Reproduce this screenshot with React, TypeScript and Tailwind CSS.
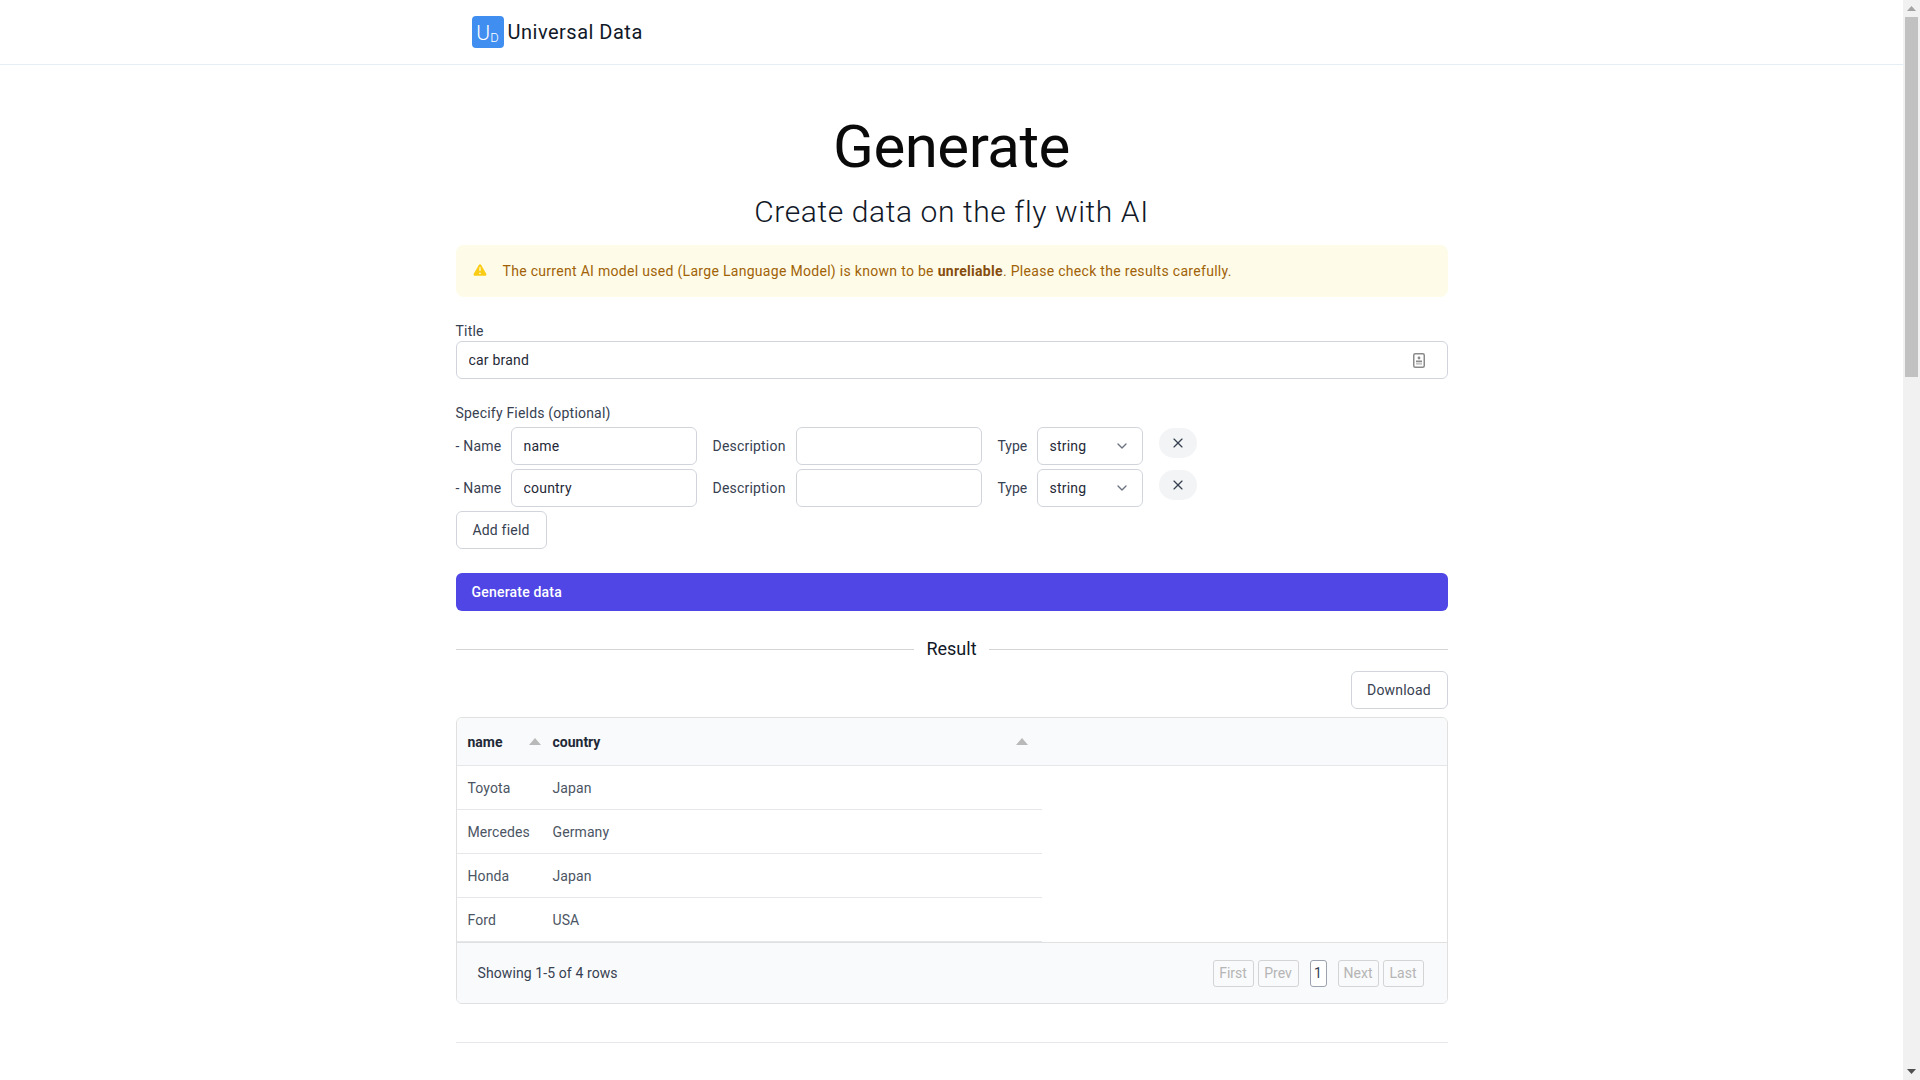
import React from "react";
import { X, ChevronDown } from "lucide-react";

const Caret = () => (
  <svg width="12" height="7" viewBox="0 0 12 7" className="shrink-0">
    <path d="M6 0 L12 7 L0 7 Z" fill="#b9b9b9" />
  </svg>
);

const inputCls =
  "h-[38px] rounded-md border border-[#d1d5db] bg-white px-3 text-sm text-[#1f2937] outline-none";

function FieldRow({ value }: { value: string }) {
  return (
    <div className="flex items-start">
      <span className="w-[55px] text-sm leading-[38px] text-[#374151] tracking-[0.2px]">- Name</span>
      <input readOnly defaultValue={value} className={`${inputCls} w-[186px] tracking-[0.2px]`} />
      <span className="ml-4 w-[83px] text-sm leading-[38px] text-[#374151] tracking-[0.2px]">Description</span>
      <input readOnly defaultValue="" className={`${inputCls} w-[186px]`} />
      <span className="ml-4 w-[39px] text-sm leading-[38px] text-[#374151]">Type</span>
      <div className={`${inputCls} w-[106px] flex items-center justify-between`}>
        <span className="tracking-[0.2px]">string</span>
        <ChevronDown size={16} strokeWidth={2} color="#6b7280" />
      </div>
      <button className="ml-4 mt-px flex h-[30px] w-[38px] items-center justify-center rounded-full bg-[#f3f4f6] text-[#374151]">
        <X size={16} strokeWidth={1.75} />
      </button>
    </div>
  );
}

function DataRow({ a, b }: { a: string; b: string }) {
  return (
    <div className="flex h-11 w-[585px] items-center border-b border-[#e5e7eb] text-sm text-[#4b5563]">
      <span className="w-[96px] pl-[11px] tracking-[0.1px]">{a}</span>
      <span className="tracking-[0.1px]">{b}</span>
    </div>
  );
}

function PageBtn({ children }: { children: React.ReactNode }) {
  return (
    <button className="flex h-[27px] w-[41px] items-center justify-center rounded-[3px] border border-[#d4d4d4] text-sm text-[#b5b5b5]">
      {children}
    </button>
  );
}

export default function App() {
  return (
    <div className="flex h-screen overflow-hidden bg-white font-['Roboto',sans-serif]">
      <main className="min-w-0 flex-1">
        <header className="h-[65px] border-b border-[#e5eef5]">
          <div className="mx-auto flex h-16 w-[1024px] items-center pl-[32px]">
            <div className="flex h-8 w-8 items-end justify-center rounded-[4px] bg-[#3f8ef0] pb-[4px] text-white">
              <span className="text-[21px] font-light leading-none">U</span>
              <span className="text-[13px] font-light leading-none">D</span>
            </div>
            <span className="ml-1 text-[20px] tracking-[0.5px] text-[#111827]">Universal Data</span>
          </div>
        </header>

        <div className="mx-auto w-[1024px] px-4">
          <h1 className="mt-[52px] text-center text-6xl font-normal text-[#0a0a0a] tracking-[-0.5px]">Generate</h1>
          <h2 className="mt-[17px] text-center text-3xl font-light text-[#111827] tracking-[0.6px]">
            Create data on the fly with AI
          </h2>

          <div className="mt-[15px] flex h-[52px] items-center rounded-lg bg-[#fefce8] pl-4 text-sm text-[#a16207]">
            <svg width="16" height="16" viewBox="0 0 20 20" fill="#facc15" className="shrink-0">
              <path
                fillRule="evenodd"
                clipRule="evenodd"
                d="M8.485 2.495c.673-1.167 2.357-1.167 3.03 0l6.28 10.875c.673 1.167-.17 2.625-1.516 2.625H3.72c-1.347 0-2.189-1.458-1.515-2.625L8.485 2.495zM10 5a.75.75 0 01.75.75v3.5a.75.75 0 01-1.5 0v-3.5A.75.75 0 0110 5zm0 9a1 1 0 100-2 1 1 0 000 2z"
              />
            </svg>
            <p className="ml-[15px] tracking-[0.3px]">
              The current AI model used (Large Language Model) is known to be{" "}
              <strong className="font-bold text-[#854d0e]">unreliable</strong>. Please check the results carefully.
            </p>
          </div>

          <label className="mt-6 block text-sm text-[#374151] tracking-[0.2px]">Title</label>
          <div className="relative">
            <input readOnly defaultValue="car brand" className={`${inputCls} w-full tracking-[0.2px]`} />
            <svg width="12" height="15" viewBox="0 0 12 15" className="absolute right-[23px] top-[12px]">
              <rect x="0.75" y="0.75" width="10.5" height="13.5" rx="1.5" fill="#fff" stroke="#8a8a8a" strokeWidth="1.5" />
              <circle cx="6" cy="5" r="1.4" fill="#8a8a8a" />
              <rect x="3" y="7.5" width="6" height="1.8" fill="#8a8a8a" />
              <rect x="3" y="10.3" width="6" height="1.2" fill="#b0b0b0" />
            </svg>
          </div>

          <label className="mt-6 block text-sm text-[#374151] tracking-[0.2px]">Specify Fields (optional)</label>
          <div className="mt-1 flex flex-col gap-1">
            <FieldRow value="name" />
            <FieldRow value="country" />
            <div>
              <button className="h-[38px] w-[91px] rounded-md border border-[#d1d5db] bg-white text-sm text-[#374151] tracking-[0.2px]">
                Add field
              </button>
            </div>
          </div>

          <button className="mt-6 block h-[38px] w-full rounded-md bg-[#4f46e5] pl-4 text-left text-sm font-medium text-white tracking-[0.2px]">
            Generate data
          </button>

          <div className="mt-6 flex items-center gap-3">
            <div className="h-px flex-1 bg-[#d4d4d4]" />
            <span className="text-lg text-[#111827]">Result</span>
            <div className="h-px flex-1 bg-[#d4d4d4]" />
          </div>

          <div className="mt-2 flex justify-end">
            <button className="h-[38px] w-[97px] rounded-md border border-[#d1d5db] bg-white text-sm text-[#374151] tracking-[0.2px]">
              Download
            </button>
          </div>

          <div className="mt-2 overflow-hidden rounded-md border border-[#e0e0e0]">
            <div className="flex h-12 items-center border-b border-[#e5e7eb] bg-[#f9fafb] text-sm font-bold text-[#1f2937]">
              <div className="flex w-[96px] items-center justify-between pl-[11px] pr-[12px]">
                <span>name</span>
                <Caret />
              </div>
              <div className="flex w-[475px] items-center justify-between">
                <span>country</span>
                <Caret />
              </div>
            </div>
            <DataRow a="Toyota" b="Japan" />
            <DataRow a="Mercedes" b="Germany" />
            <DataRow a="Honda" b="Japan" />
            <DataRow a="Ford" b="USA" />
            <div className="flex h-[61px] items-center justify-between border-t border-[#e0e0e0] bg-[#f9fafb] pl-[21px] pr-[23px]">
              <span className="text-sm text-[#374151] tracking-[0.1px]">Showing 1-5 of 4 rows</span>
              <div className="flex items-center">
                <PageBtn>First</PageBtn>
                <span className="ml-1"><PageBtn>Prev</PageBtn></span>
                <button className="mx-[11px] flex h-[27px] w-[17px] items-center justify-center rounded-[3px] border border-[#9ca3af] bg-white text-sm text-[#374151]">
                  1
                </button>
                <PageBtn>Next</PageBtn>
                <span className="ml-1"><PageBtn>Last</PageBtn></span>
              </div>
            </div>
          </div>

          <div className="mt-[38px] h-px bg-[#e5e7eb]" />
        </div>
      </main>

      <aside className="flex h-screen w-[17px] shrink-0 flex-col items-center bg-[#f1f1f1]">
        <div className="flex h-[17px] w-full items-center justify-center">
          <svg width="9" height="5" viewBox="0 0 9 5"><path d="M4.5 0 L9 5 L0 5 Z" fill="#a3a3a3" /></svg>
        </div>
        <div className="h-[360px] w-[13px] bg-[#c1c1c1]" />
        <div className="flex-1" />
        <div className="flex h-[17px] w-full items-center justify-center">
          <svg width="9" height="5" viewBox="0 0 9 5"><path d="M0 0 L9 0 L4.5 5 Z" fill="#505050" /></svg>
        </div>
      </aside>
    </div>
  );
}
